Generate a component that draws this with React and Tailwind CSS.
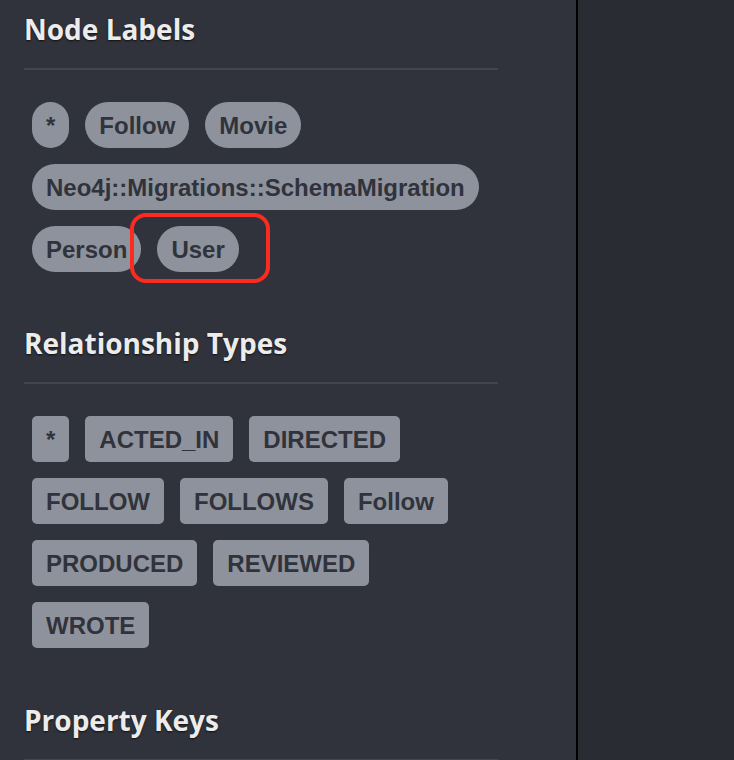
const nodeLabels = ['*', 'Follow', 'Movie', 'Neo4j::Migrations::SchemaMigration', 'Person', 'User'];
const relTypes = ['*', 'ACTED_IN', 'DIRECTED', 'FOLLOW', 'FOLLOWS', 'Follow', 'PRODUCED', 'REVIEWED', 'WROTE'];

const Heading = ({ children, className = '' }) => (
    <div className={className}>
        <h2 className="text-[28px] leading-[34px] font-bold text-[#ececec] [text-shadow:0_1px_2px_rgba(0,0,0,0.7)] font-['Open_Sans',sans-serif]">
            {children}
        </h2>
        <div className="mt-[22px] h-[2px] w-[474px] bg-[#42454d]"></div>
    </div>
);

const Pill = ({ label, round, highlight }) => (
    <div className="relative m-2">
        <span className={`h-[46px] px-[14px] pt-[2px] flex items-center bg-[#8e929c] text-[#30333b] text-[24px] font-bold font-['Liberation_Sans',Arial,sans-serif] whitespace-nowrap ${round ? 'rounded-full' : 'rounded-[5px]'}`}>
            {label}
        </span>
        {highlight && (
            <span className="absolute -left-[27px] -right-[31px] -top-[13px] -bottom-[11px] border-4 border-[#fb2b1f] rounded-[16px] pointer-events-none"></span>
        )}
    </div>
);

export default function App() {
    return (
        <div className="flex h-[760px] w-[734px] overflow-hidden bg-[#292c33]">
            <div className="w-[578px] h-full shrink-0 bg-[#30333b] border-r-2 border-black pl-6 pt-[12px]">
                <Heading>Node Labels</Heading>
                <div className="w-[474px] mt-[24px] flex flex-wrap">
                    {nodeLabels.map((l) => (
                        <Pill key={l} label={l} round highlight={l === 'User'} />
                    ))}
                </div>

                <Heading className="mt-[46px]">Relationship Types</Heading>
                <div className="w-[474px] mt-[24px] flex flex-wrap">
                    {relTypes.map((l, i) => (
                        <Pill key={i} label={l} />
                    ))}
                </div>

                <Heading className="mt-[47px]">Property Keys</Heading>
            </div>
            <div className="flex-1 h-full"></div>
        </div>
    );
}
